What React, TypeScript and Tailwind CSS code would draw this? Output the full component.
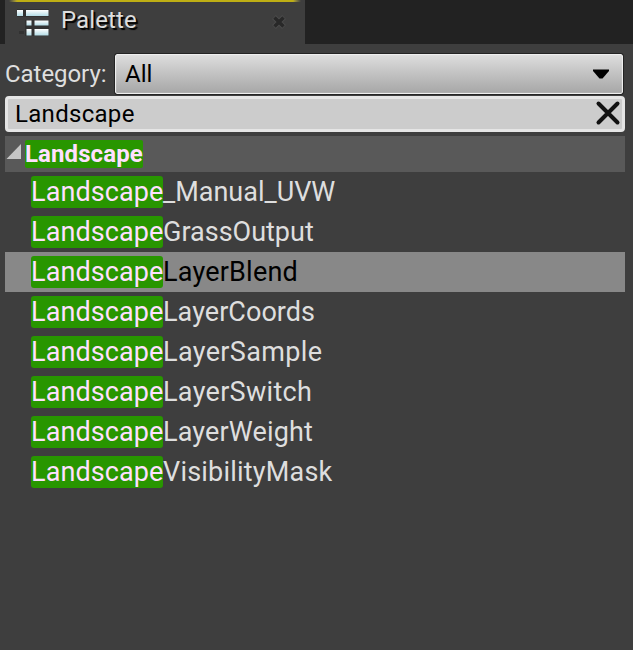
const items = [
  { name: '_Manual_UVW', spacing: 'tracking-[0px]' },
  { name: 'GrassOutput', spacing: 'tracking-[0px]' },
  { name: 'LayerBlend', spacing: 'tracking-[0.2px]' },
  { name: 'LayerCoords', spacing: 'tracking-[0.05px]' },
  { name: 'LayerSample', spacing: 'tracking-[0.35px]' },
  { name: 'LayerSwitch', spacing: 'tracking-[0.3px]' },
  { name: 'LayerWeight', spacing: 'tracking-[0.15px]' },
  { name: 'VisibilityMask', spacing: 'tracking-[0.2px]' },
];

function PaletteIcon() {
  return (
    <svg width="34" height="28" viewBox="0 0 34 28" className="shrink-0">
      <defs>
        <linearGradient id="bars" x1="0" y1="0" x2="0" y2="1">
          <stop offset="0" stopColor="#ffffff" />
          <stop offset="1" stopColor="#b4dce6" />
        </linearGradient>
        <filter id="soft">
          <feGaussianBlur stdDeviation="0.6" />
        </filter>
      </defs>
      <g filter="url(#soft)">
        <g fill="#2b2b2b" opacity=".65">
          <rect x="1" y="1" width="32" height="8" />
          <rect x="9" y="12" width="24" height="16" />
          <rect x="3" y="23" width="5" height="3" />
        </g>
        <g fill="url(#bars)">
          <rect x="1" y="2" width="6" height="6" />
          <rect x="10" y="2" width="22.500" height="6" />
          <rect x="10.500" y="12.500" width="5" height="5" />
          <rect x="18.500" y="12.500" width="14" height="5" />
          <rect x="10.500" y="21" width="5" height="6.500" />
          <rect x="18.500" y="21" width="14" height="6.500" />
        </g>
      </g>
    </svg>
  );
}

export default function App() {
  return (
    <div className="flex h-[650px] w-[633px] flex-col overflow-hidden bg-[#3e3e3e] font-['Roboto',sans-serif] text-[#dedede]">
      <header className="flex h-11 shrink-0 bg-[#222222] pl-[5px]">
        <div className="flex h-11 w-[300px] flex-col bg-[#3e3e3e]">
          <div className="flex h-[2px] shrink-0 px-1">
            <div className="w-2 bg-linear-to-r from-[#3e3e3e] to-[#beae14]" />
            <div className="grow bg-[#beae14]" />
            <div className="w-2 bg-linear-to-l from-[#3e3e3e] to-[#beae14]" />
          </div>
          <div className="flex h-[42px] items-start pl-[11px] pt-[6px]">
            <PaletteIcon />
            <span className="-mt-1 ml-[11px] h-8 w-[211px] shrink-0 text-[24px] leading-8 tracking-[0.1px] [text-shadow:2px_2px_1px_#000]">Palette</span>
            <svg width="14" height="14" viewBox="0 0 14 14" className="mt-[7px] shrink-0">
              <path d="M2 2 12 12M12 2 2 12" stroke="#4b4b4b" strokeWidth="5.500" />
              <path d="M2.500 2.500 11.500 11.500M11.500 2.500 2.500 11.500" stroke="#282828" strokeWidth="3.500" />
            </svg>
          </div>
        </div>
      </header>
      <main className="flex flex-col pl-[5px] pr-2 pt-[9px]">
        <div className="flex h-[42px] w-[618px] items-center">
          <span className="w-[110px] shrink-0 text-[24px] leading-8 tracking-[-0.05px]">Category:</span>
          <div className="flex h-10 grow items-center justify-between rounded-[2px] border border-[#eeeeee] bg-linear-to-b from-[#dddddd] to-[#a7a7a7] pl-[9px] pr-3 text-black shadow-[inset_0_0_1px_#eee] outline-1 outline-[#242424]">
            <span className="text-[24px] leading-8">All</span>
            <svg width="18" height="10" viewBox="0 0 18 10">
              <path d="M1 .5h16v1.500L10.500 9.500h-3L1 2z" fill="#000" />
            </svg>
          </div>
        </div>
        <div className="mt-px flex h-9 items-center justify-between rounded-[4px] border-[3px] border-[#e5e5e5] bg-[#cccccc] pl-[7px] pr-px text-black">
          <span className="text-[24px] leading-8 tracking-[0.3px]">Landscape</span>
          <svg width="26" height="26" viewBox="0 0 26 26" className="mb-0.5">
            <path d="M3.500 3.500 22.500 22.500M22.500 3.500 3.500 22.500" stroke="#111" strokeWidth="4" strokeLinecap="round" />
          </svg>
        </div>
        <div className="mt-1 flex h-9 items-center bg-[#595959] pl-px">
          <svg width="16" height="16" viewBox="0 0 16 16" className="mb-1 shrink-0">
            <path d="M15 0v15H.5z" fill="#c5c5c5" />
          </svg>
          <span className="ml-[3px] h-7 w-[118px] rounded-[2px] bg-[#289600] text-[24px] font-bold leading-7 tracking-[0.1px] text-[#ffe0ff]">Landscape</span>
        </div>
        <ul>
          {items.map(({ name, spacing }) => (
            <li
              key={name}
              className={`flex h-10 items-center pl-[26px] text-[27px] leading-8 ${name === 'LayerBlend' ? 'bg-[#888888] text-black' : ''}`}
            >
              <span className="h-8 w-[132px] shrink-0 rounded-[3px] bg-[#289600] tracking-[0.1px] text-[#ffe0ff]">Landscape</span>
              <span className={spacing}>{name}</span>
            </li>
          ))}
        </ul>
      </main>
    </div>
  );
}
